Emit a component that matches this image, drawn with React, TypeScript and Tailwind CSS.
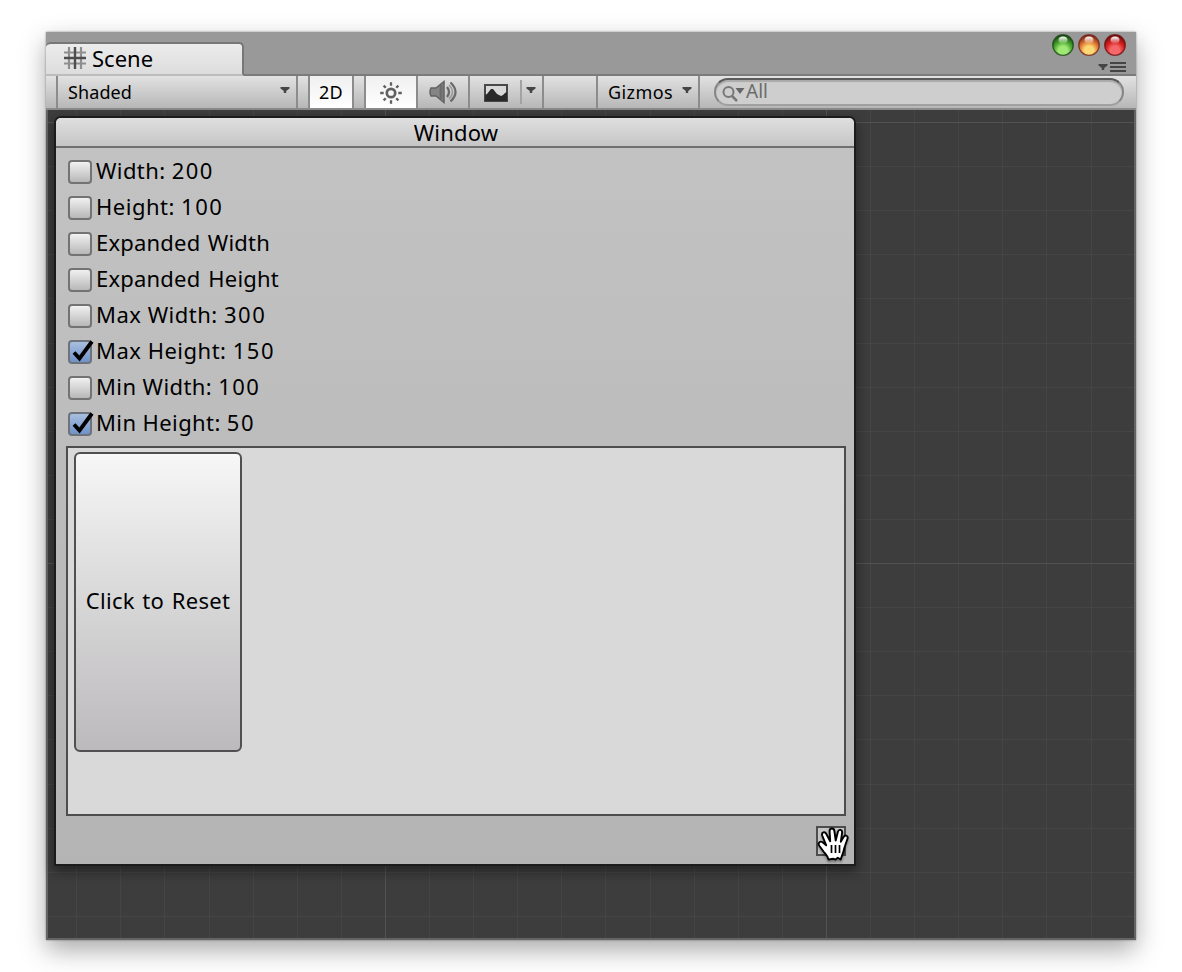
import React from "react";

const options = [
  { label: "Width:", value: "200", on: false, tracking: "tracking-[0.4px]" },
  { label: "Height:", value: "100", on: false, tracking: "tracking-[0.5px]" },
  { label: "Expanded Width", on: false, tracking: "tracking-[0.2px] [word-spacing:1.5px]" },
  { label: "Expanded Height", on: false, tracking: "tracking-[0.2px] [word-spacing:2px]" },
  { label: "Max Width:", value: "300", on: false, tracking: "tracking-[0.5px]" },
  { label: "Max Height:", value: "150", on: true, tracking: "tracking-[0.5px]" },
  { label: "Min Width:", value: "100", on: false, tracking: "tracking-[0.4px]" },
  { label: "Min Height:", value: "50", on: true, tracking: "tracking-[0.4px]" },
];

const minorX = Array.from({ length: 25 }, (_, i) => Math.round(337.5 + (i - 7) * 44.1 - 0.6)).filter((x) => x > 0 && x < 1088);
const minorY = Array.from({ length: 20 }, (_, i) => Math.round(12 + i * 44.1));

function Grid() {
  return (
    <svg className="absolute inset-0" width="1086" height="828" shapeRendering="crispEdges">
      <g fill="#454545">
        {minorX.map((x) => <rect key={x} x={x} y="0" width="1" height="828" />)}
        {minorY.map((y) => <rect key={y} x="0" y={y} width="1088" height="1" />)}
      </g>
      <g fill="#525252">
        <rect x="337" y="0" width="1" height="828" />
        <rect x="778" y="0" width="1" height="828" />
        <rect x="0" y="12" width="1088" height="1" />
        <rect x="0" y="453" width="1088" height="1" />
      </g>
    </svg>
  );
}

function Arrow({ className = "" }: { className?: string }) {
  return (
    <svg className={className} width="10" height="7" viewBox="0 0 10 7">
      <path d="M0.5 0h9v1.5L6.2 4v2H3.8V4L.5 1.5z" fill="#454545" />
    </svg>
  );
}

function Orb({ id, dark, mid, light }: { id: string; dark: string; mid: string; light: string }) {
  return (
    <svg width="22" height="22" viewBox="0 0 22 22">
      <defs>
        <radialGradient id={id} cx="0.5" cy="0.78" r="0.75">
          <stop offset="0" stopColor={light} />
          <stop offset="0.3" stopColor={light} />
          <stop offset="0.6" stopColor={mid} />
          <stop offset="1" stopColor={dark} />
        </radialGradient>
        <linearGradient id={id + "s"} x1="0" y1="0" x2="0" y2="1">
          <stop offset="0" stopColor="#fff" />
          <stop offset="1" stopColor="#fff" stopOpacity="0.1" />
        </linearGradient>
      </defs>
      <circle cx="11" cy="11" r="10.3" fill={`url(#${id})`} stroke={dark} strokeOpacity="0.75" strokeWidth="1.3" />
      <ellipse cx="11" cy="6" rx="4.5" ry="3.5" fill={`url(#${id}s)`} />
    </svg>
  );
}

function Hand() {
  return (
    <svg className="absolute -left-[1px] -top-[1px] drop-shadow-[0_2px_1px_rgba(0,0,0,0.35)]" width="34" height="34" viewBox="0 0 34 34">
      <path
        d="M11.5 32.5C11 29 8.500 27 6.500 24.500L2.300 18.800C.5 16 3 13.500 5.600 15.300L9.200 18.300L5.200 8.500C4.200 5.300 7.800 4 9.200 6.700L13.200 14.200L12.600 4.300C12.500 .8 16.900.6 17.400 4L18.700 13.500L20.900 4.800C21.700 1.700 25.600 2.600 25.100 5.700L23.800 14.800L26.600 10C28.100 7.300 31.500 8.800 30.500 11.700L27.300 21C26.500 26 24.800 28.500 23.700 32.500L20.800 30.800L18.600 32.500L16.500 31.800Z"
        fill="#fff" stroke="#000" strokeWidth="1.900" strokeLinejoin="round"
      />
      <path d="M14.500 18v8M18.500 18v8M22.500 18v8" stroke="#000" strokeWidth="1.700" />
    </svg>
  );
}

function Toggle({ label, value, on, tracking }: { label: string; value?: string; on: boolean; tracking: string }) {
  return (
    <label className="flex h-9 items-center">
      <span
        className={
          "relative h-6 w-6 shrink-0 rounded-[4px] border-2 " +
          (on ? "border-[#6d727b] bg-linear-to-b from-[#a8bfdf] to-[#6f93c8]" : "border-[#737373] bg-linear-to-b from-[#f1f1f1] to-[#b8b8b8]")
        }
      >
        {on && (
          <svg className="absolute -left-[1px] -top-[2px]" width="28" height="26" viewBox="0 0 28 26">
            <path d="M5 12.500L10.500 18.500L23 1.500" fill="none" stroke="#000" strokeWidth="3.800" />
          </svg>
        )}
      </span>
      <span className={"-mt-[4px] ml-1 whitespace-nowrap text-[22px] leading-[36px] " + tracking}>
        {label}
        {value && <> <span className="tracking-[1.5px]">{value}</span></>}
      </span>
    </label>
  );
}

export default function App() {
  return (
    <div className="h-[972px] w-[1182px] overflow-hidden bg-white pl-[46px] pt-[32px] font-['Noto_Sans',sans-serif] text-black">
      <div className="flex h-[908px] w-[1090px] flex-col bg-[#999] shadow-[0_10px_24px_rgba(0,0,0,0.34),0_0_2px_rgba(0,0,0,0.4)]">
        <header className="flex h-[44px] shrink-0 items-end justify-between border-b-2 border-[#7b7b7b]">
          <div className="-mb-[2px] flex h-[34px] w-[198px] items-center rounded-t-[5px] border-b-2 border-r-2 border-t-2 border-b-[#bdbdbd] border-r-[#777] border-t-[#777] bg-linear-to-b from-[#ececec] to-[#dddddd] pl-[18px]">
            <svg className="-mt-[2px]" width="22" height="22" viewBox="0 0 22 22">
              <path d="M5 0v22M17 0v22M0 5.500h22M0 16.500h22" stroke="#8f8f8f" strokeWidth="2.200" />
              <path d="M11 0v22M0 11h22" stroke="#4d4d4d" strokeWidth="2.400" />
            </svg>
            <span className="-mt-[2px] ml-[6px] text-[22px] leading-7">Scene</span>
          </div>
          <div className="flex flex-col items-end self-start pr-[10px] pt-[2px]">
            <div className="flex gap-1">
              <Orb id="g" dark="#16450f" mid="#48a52d" light="#9fe873" />
              <Orb id="o" dark="#762016" mid="#e07a35" light="#fbd873" />
              <Orb id="r" dark="#6b0b0b" mid="#d7201f" light="#f4686c" />
            </div>
            <div className="mt-[6px] flex gap-[2px]">
              <Arrow className="mt-[2px]" />
              <div className="flex w-4 flex-col gap-[2px]">
                <i className="h-[2px] bg-[#444]" />
                <i className="h-[2px] bg-[#444]" />
                <i className="h-[2px] bg-[#444]" />
              </div>
            </div>
          </div>
        </header>

        <div className="flex h-[34px] shrink-0 border-b-2 border-[#8a8a8a] bg-linear-to-b from-[#e2e2e2] to-[#b7b7b7] text-[18px] leading-[32px]">
          <div className="w-[10px] shrink-0" />
          <div className="flex w-[242px] shrink-0 items-center justify-between border-x-2 border-[#8c8c8c] pl-[10px] pr-[6px]">
            <span className="tracking-[0.1px]">Shaded</span>
            <Arrow className="-mt-[4px]" />
          </div>
          <div className="w-[10px] shrink-0" />
          <div className="w-[46px] shrink-0 border-x-2 border-[#8c8c8c] bg-linear-to-b from-[#f0f0f0] to-white text-center tracking-[0.3px]">2D</div>
          <div className="w-[10px] shrink-0" />
          <div className="flex w-[54px] shrink-0 items-center justify-center border-x-2 border-[#8c8c8c] bg-linear-to-b from-[#f0f0f0] to-white">
            <svg className="mt-[2px]" width="24" height="24" viewBox="0 0 24 24" fill="none" stroke="#606060" strokeWidth="2.300">
              <circle cx="12" cy="12" r="4.200" strokeWidth="2.700" />
              <path d="M12 1.200v3.500M12 19.300v3.500M1.200 12h3.500M19.300 12h3.500M4.600 4.600l2.200 2.200M17.200 17.200l2.200 2.200M4.600 19.400l2.200-2.200M17.200 6.800l2.200-2.200" />
            </svg>
          </div>
          <div className="flex w-[52px] shrink-0 items-center justify-center border-r-2 border-[#8c8c8c]">
            <svg width="28" height="24" viewBox="0 0 28 24">
              <path d="M2 8H7L15 1.500v21L7 16H2Q0 12 2 8z" fill="#858585" stroke="#626262" strokeWidth="1.500" />
              <path d="M12 5v14" stroke="#6c6c6c" strokeWidth="3" />
              <path d="M18 7q4 5 0 10M21.500 2.500q10 9.500 0 19" fill="none" stroke="#6a6a6a" strokeWidth="2.300" />
              <path d="M20 5q7 7 0 14" fill="none" stroke="#9b9b9b" strokeWidth="1.500" />
            </svg>
          </div>
          <div className="flex w-[74px] shrink-0 items-center border-r-2 border-[#8c8c8c] pl-[14px]">
            <svg className="mt-[2px]" width="24" height="18" viewBox="0 0 24 18">
              <path d="M1 1h22v16H1z" fill="#d8d8d8" stroke="#484848" strokeWidth="2" />
              <path d="M1 11L3 10L7 5L9 5L13 10L17 12L19 11L21 9L23 8V17H1z" fill="#292929" />
            </svg>
            <i className="ml-[12px] h-6 w-[2px] bg-[#a3a3a3]" />
            <Arrow className="-mt-[4px] ml-[4px]" />
          </div>
          <div className="w-[52px] shrink-0" />
          <div className="flex w-[104px] shrink-0 items-center justify-between border-x-2 border-[#8c8c8c] pl-[10px] pr-[6px]">
            <span className="tracking-[0.4px]">Gizmos</span>
            <Arrow className="-mt-[4px]" />
          </div>
          <div className="ml-[14px] mt-[2px] flex h-7 w-[410px] rounded-full border-2 border-b-[#a0a0a0] border-l-[#858585] border-r-[#858585] border-t-[#5a5a5a] bg-[#cecece] pl-[6px] text-[#6c6c6c] shadow-[inset_0_2px_1px_#aaa]">
            <svg className="mt-[5px]" width="24" height="18" viewBox="0 0 24 18">
              <circle cx="6.500" cy="7" r="5" fill="none" stroke="#777" strokeWidth="2" />
              <path d="M10 11l5 5" stroke="#777" strokeWidth="2.500" />
              <path d="M13.500 3h9l-4.500 6z" fill="#666" />
            </svg>
            <span className="text-[19px] leading-[22px]">All</span>
          </div>
        </div>

        <main className="relative min-h-0 flex-1 border-x-2 border-b-2 border-[#646464] bg-[#3d3d3d]">
          <Grid />
          <section className="absolute left-[8px] top-[8px] flex h-[746px] w-[798px] flex-col rounded-t-[5px] bg-linear-to-b from-[#c3c3c3] to-[#b4b4b4] shadow-[0_0_0_2px_#1c1c1c,0_5px_12px_3px_rgba(0,0,0,0.4)]">
            <h1 className="h-[30px] shrink-0 rounded-t-[5px] border-b-2 border-[#707070] bg-linear-to-b from-[#e0dfe0] to-[#c6c6c6] pl-[2px] text-center text-[22px] leading-[28px] tracking-[0.2px]">Window</h1>
            <div className="flex flex-col pl-[12px] pt-[6px]">
              {options.map((o) => <Toggle key={o.label} {...o} />)}
            </div>
            <div className="ml-[10px] mt-[4px] h-[370px] w-[780px] border-2 border-[#4d4d4d] bg-[#d9d9d9] pl-[6px] pt-[4px]">
              <button className="h-[300px] w-[168px] whitespace-nowrap rounded-[6px] border-2 border-[#505050] bg-linear-to-b from-[#f8f7f8] via-[#d8d7d8] to-[#bcbabc] pb-[4px] text-[22px] tracking-[0.3px] [word-spacing:1.5px]">Click to Reset</button>
            </div>
            <div className="relative ml-[760px] mt-[10px] h-[30px] w-[30px] border-2 border-[#4d4d4d] bg-[#c5c5c5]">
              <Hand />
            </div>
          </section>
        </main>
      </div>
    </div>
  );
}
